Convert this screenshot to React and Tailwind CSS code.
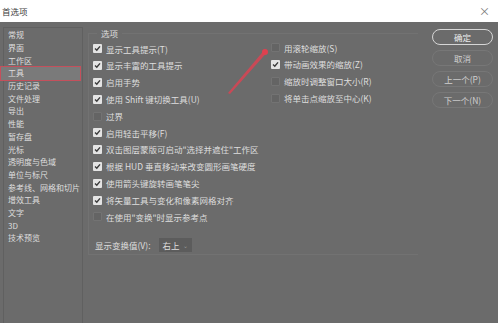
import React from 'react';

const font = { fontFamily: '"Noto Sans CJK SC", "Noto Sans", sans-serif' };

const sideItems = [
  '常规', '界面', '工作区', '工具', '历史记录', '文件处理', '导出', '性能', '暂存盘',
  '光标', '透明度与色域', '单位与标尺', '参考线、网格和切片', '增效工具', '文字', '3D', '技术预览',
];

const leftOpts = [
  ['显示工具提示(T)', true],
  ['显示丰富的工具提示', true],
  ['启用手势', true],
  ['使用 Shift 键切换工具(U)', true],
  ['过界', false],
  ['启用轻击平移(F)', true],
  ['双击图层蒙版可启动"选择并遮住"工作区', true],
  ['根据 HUD 垂直移动来改变圆形画笔硬度', true],
  ['使用箭头键旋转画笔笔尖', true],
  ['将矢量工具与变化和像素网格对齐', true],
  ['在使用"变换"时显示参考点', false],
];

const rightOpts = [
  ['用滚轮缩放(S)', false],
  ['带动画效果的缩放(Z)', true],
  ['缩放时调整窗口大小(R)', false],
  ['将单击点缩放至中心(K)', false],
];

function Check({ on }) {
  if (on) {
    return (
      <span className="w-[9px] h-[9px] shrink-0 rounded-[1px] bg-[#e4e4e4] flex items-center justify-center">
        <svg width="7" height="7" viewBox="0 0 7 7">
          <path d="M1 3.6 L2.8 5.3 L6 1.4" fill="none" stroke="#3a3a3a" strokeWidth="1.4" />
        </svg>
      </span>
    );
  }
  return <span className="w-[9px] h-[9px] shrink-0 rounded-[1px] bg-[#646464] border border-[#737373]" />;
}

function Row({ label, on }) {
  return (
    <div className="h-[16.8px] flex items-center gap-[4px] whitespace-nowrap">
      <Check on={on} />
      <span>{label}</span>
    </div>
  );
}

export default function App() {
  return (
    <div className="w-[498px] h-[323px] flex flex-col bg-[#6b6b6b] overflow-hidden relative" style={font}>
      <div className="h-[22px] bg-white flex items-center justify-between pl-[2px] pr-[8px] text-[8.5px] text-[#3c3c3c]">
        <span>首选项</span>
        <span className="text-[11px] text-[#777] leading-none">×</span>
      </div>

      <div className="flex-1 flex text-[#dedede]">
        <div className="ml-[3px] mt-[5px] w-[80px] border-l border-r border-t border-[#606060] pt-[1px] text-[8px]">
          {sideItems.map((s) => (
            <div key={s} className="relative h-[12.7px] flex items-center pl-[4px] whitespace-nowrap">
              {s === '工具' && (
                <span className="absolute -left-[4px] right-[1px] -top-[1px] -bottom-[1.5px] bg-[#7a7a7a] border border-[#c4505c]" />
              )}
              <span className="relative">{s}</span>
            </div>
          ))}
        </div>

        <div className="ml-[5px] mt-[11px] w-[330px] h-[222px] border-l border-t border-b border-[#727272] relative text-[8.5px]">
          <span className="absolute -top-[7px] left-[8px] px-[4px] bg-[#6b6b6b] leading-[12px]">选项</span>
          <div className="flex pt-[6.6px] pl-[4px]">
            <div className="w-[178px]">
              {leftOpts.map(([t, on]) => <Row key={t} label={t} on={on} />)}
            </div>
            <div className="-mt-[1px]">
              {rightOpts.map(([t, on]) => <Row key={t} label={t} on={on} />)}
            </div>
          </div>
          <div className="mt-[13px] pl-[6px] flex items-center gap-[8px]">
            <span>显示变换值(V):</span>
            <span className="w-[33px] h-[14px] bg-[#5c5c5c] flex items-center justify-between px-[4px]">
              <span>右上</span>
              <span className="text-[6px] text-[#999]">⌄</span>
            </span>
          </div>
        </div>

        <div className="ml-auto mr-[5px] mt-[7px] flex flex-col gap-[5px] text-[8.5px]">
          <button className="w-[61px] h-[16px] rounded-full border border-[#d6d6d6] text-[#eeeeee] flex items-center justify-center">确定</button>
          <button className="w-[61px] h-[16px] rounded-full border border-[#777777] text-[#d0d0d0] flex items-center justify-center">取消</button>
          <button className="w-[61px] h-[16px] rounded-full border border-[#777777] text-[#d0d0d0] flex items-center justify-center">上一个(P)</button>
          <button className="w-[61px] h-[16px] rounded-full border border-[#777777] text-[#d0d0d0] flex items-center justify-center">下一个(N)</button>
        </div>
      </div>

      <svg className="absolute left-0 top-0 pointer-events-none" width="498" height="323">
        <polygon points="228,93 230,94 266,53.5 263.5,51" fill="#d44654" opacity="0.9" />
        <circle cx="265" cy="52" r="3" fill="#e0404f" />
      </svg>
    </div>
  );
}
